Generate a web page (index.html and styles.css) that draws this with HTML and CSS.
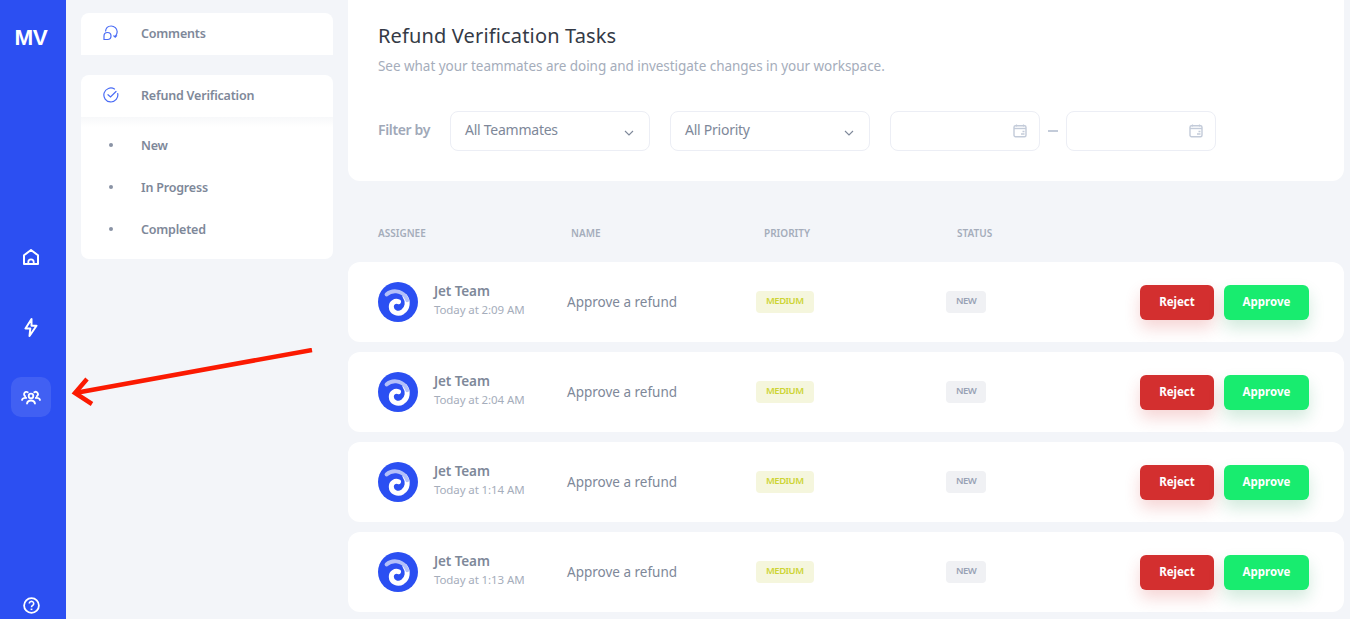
FILE: index.html
```html
<!DOCTYPE html>
<html lang="en">

<head>
  <meta charset="UTF-8">
  <meta name="viewport" content="width=device-width, initial-scale=1.0">
  <title>Refund Verification Tasks</title>
  <link rel="stylesheet" href="styles.css">
</head>

<body>
<svg class="defs" width="0" height="0">
  <symbol id="swirl" viewBox="0 0 40 40">
    <circle cx="20" cy="20" r="20" fill="#2b4ff2"/>
    <path d="M27 14.500C30.500 19 30 26.500 24.500 30C19.500 33 13.500 30 13.300 24.800C13.200 20.800 17 18.300 20.500 19.700" fill="none" stroke="#fff" stroke-width="5" stroke-linecap="round"/>
    <path d="M8.500 12.500C14 7.500 23 8.500 27 14C28 15.300 28.800 16.800 29.300 18.300" fill="none" stroke="#b3c0f9" stroke-width="3.800" stroke-linecap="round"/>
  </symbol>
  <symbol id="calendar" viewBox="0 0 14 14">
    <path d="M3.500 .5v2M10.500 .5v2" stroke="#c3cbd9" stroke-width="1.200"/>
    <rect x="1" y="1.800" width="12" height="11" rx="1.500" fill="none" stroke="#c3cbd9" stroke-width="1.400"/>
    <path d="M1 4.500h12" stroke="#c3cbd9" stroke-width="1.400"/>
    <path d="M8 10h3.500M9.500 7.500h2" stroke="#c3cbd9" stroke-width="1.400"/>
  </symbol>
  <symbol id="chevron" viewBox="0 0 10 6">
    <path d="M1 1l4 4 4-4" fill="none" stroke="#7e8899" stroke-width="1.100"/>
  </symbol>
</svg>

<aside class="sidebar">
  <div class="logo">MV</div>
  <nav class="side-nav">
    <a class="side-link">
      <svg width="16" height="16" viewBox="0 0 16 16" fill="none" stroke="#fff" stroke-width="2" stroke-linejoin="round"><path d="M1 6.300L8 1l7 5.300V15H1z"/><path d="M5.300 15v-2a2.700 2.700 0 0 1 5.400 0v2" stroke-width="1.800"/></svg>
    </a>
    <a class="side-link">
      <svg width="14" height="19" viewBox="0 0 14 19" fill="none" stroke="#fff" stroke-width="2" stroke-linejoin="round"><path d="M7.500 1L1.500 10.500h4.800L5.500 18 12.500 7.800H7.500z"/></svg>
    </a>
    <a class="side-link active">
      <svg width="20" height="15" viewBox="0 0 20 15" fill="none" stroke="#fff" stroke-width="1.800" stroke-linecap="round"><circle cx="10" cy="6" r="2.300"/><path d="M6 13.500c.4-2 2-3 4-3s3.600 1 4 3"/><path d="M4.200 6.200a2.300 2.300 0 1 1 2.500-4M15.800 6.200a2.300 2.300 0 1 0-2.500-4"/><path d="M1 10c.5-1.600 2-2.200 4.200-2M19 10c-.5-1.600-2-2.200-4.200-2"/></svg>
    </a>
  </nav>
  <a class="help">
    <svg width="17" height="17" viewBox="0 0 17 17" fill="none" stroke="#fff" stroke-width="1.800"><circle cx="8.500" cy="8.500" r="7.400"/><path d="M6.300 6.500a2.200 2.200 0 1 1 3.400 1.900c-.8.500-1.200.9-1.200 1.800" stroke-width="1.600"/><path d="M8.500 11.600v1.500"/></svg>
  </a>
</aside>

<section class="panel">
  <div class="menu-card">
    <div class="menu-head">
      <svg class="menu-icon" width="16" height="16" viewBox="0 0 16 16" fill="none" stroke="#4a6cf5" stroke-width="1.200"><path d="M2.500 6.500C2.800 3 5.200 1 8.200 1s6 2.500 6 5.800c0 1.800-.8 3.300-2 4.500"/><path d="M10.500 10.500l1.700 1.600 1.800-1.700"/><path d="M1 11c0-2 1.500-3.500 3.500-3.500S8 9 8 11s-1.500 3.500-3.500 3.500H1z"/></svg>
      <span>Comments</span>
    </div>
  </div>
  <div class="menu-card expanded">
    <div class="menu-head">
      <svg class="menu-icon" width="16" height="16" viewBox="0 0 16 16" fill="none" stroke="#4a6cf5" stroke-width="1.200" stroke-linecap="round"><path d="M14.700 6.500A7 7 0 1 1 11.500 2"/><path d="M5 7.700l2.500 2.300L13 4.500"/></svg>
      <span>Refund Verification</span>
    </div>
    <ul class="sub-menu">
      <li>New</li>
      <li>In Progress</li>
      <li>Completed</li>
    </ul>
  </div>
</section>

<main class="content">
  <header class="tasks-head">
    <h1>Refund Verification Tasks</h1>
    <p>See what your teammates are doing and investigate changes in your workspace.</p>
    <div class="filters">
      <span class="filter-label">Filter by</span>
      <div class="select">All Teammates <svg width="10" height="6"><use href="#chevron"/></svg></div>
      <div class="select">All Priority <svg width="10" height="6"><use href="#chevron"/></svg></div>
      <div class="dates">
        <div class="date"><svg width="14" height="14"><use href="#calendar"/></svg></div>
        <span class="dash"></span>
        <div class="date"><svg width="14" height="14"><use href="#calendar"/></svg></div>
      </div>
    </div>
  </header>

  <div class="table-head">
    <span>ASSIGNEE</span>
    <span>NAME</span>
    <span>PRIORITY</span>
    <span>STATUS</span>
  </div>

  <div class="task">
    <div class="assignee">
      <svg width="40" height="40"><use href="#swirl"/></svg>
      <div><b>Jet Team</b><small>Today at 2:09 AM</small></div>
    </div>
    <div class="task-name">Approve a refund</div>
    <div><span class="badge medium">MEDIUM</span></div>
    <div><span class="badge new">NEW</span></div>
    <div class="actions"><button class="btn reject">Reject</button><button class="btn approve">Approve</button></div>
  </div>
  <div class="task">
    <div class="assignee">
      <svg width="40" height="40"><use href="#swirl"/></svg>
      <div><b>Jet Team</b><small>Today at 2:04 AM</small></div>
    </div>
    <div class="task-name">Approve a refund</div>
    <div><span class="badge medium">MEDIUM</span></div>
    <div><span class="badge new">NEW</span></div>
    <div class="actions"><button class="btn reject">Reject</button><button class="btn approve">Approve</button></div>
  </div>
  <div class="task">
    <div class="assignee">
      <svg width="40" height="40"><use href="#swirl"/></svg>
      <div><b>Jet Team</b><small>Today at 1:14 AM</small></div>
    </div>
    <div class="task-name">Approve a refund</div>
    <div><span class="badge medium">MEDIUM</span></div>
    <div><span class="badge new">NEW</span></div>
    <div class="actions"><button class="btn reject">Reject</button><button class="btn approve">Approve</button></div>
  </div>
  <div class="task">
    <div class="assignee">
      <svg width="40" height="40"><use href="#swirl"/></svg>
      <div><b>Jet Team</b><small>Today at 1:13 AM</small></div>
    </div>
    <div class="task-name">Approve a refund</div>
    <div><span class="badge medium">MEDIUM</span></div>
    <div><span class="badge new">NEW</span></div>
    <div class="actions"><button class="btn reject">Reject</button><button class="btn approve">Approve</button></div>
  </div>
</main>

<!-- annotation drawn over the screenshot -->
<svg class="arrow" width="250" height="70" viewBox="0 0 250 70" fill="none" stroke="#fb1a02" stroke-width="4.500">
  <path d="M241 2L4 45"/>
  <path d="M16 31L4 45l17 11"/>
</svg>
</body>

</html>
```

FILE: styles.css
```css
* {
  box-sizing: border-box;
}

body {
  display: flex;
  height: 619px;
  margin: 0;
  overflow: hidden;
  background: #f3f5f9;
  font-family: "Noto Sans", "Open Sans", sans-serif;
  color: #7e8899;
}

.defs {
  position: absolute;
}

.sidebar {
  display: flex;
  flex-direction: column;
  align-items: center;
  flex: 0 0 66px;
  padding: 0 4px 3px 0;
  background: #2c4ff2;
}

.logo {
  margin-top: 22px;
  font-family: "Liberation Sans", sans-serif;
  font-size: 22.500px;
  line-height: 32px;
  font-weight: 700;
  letter-spacing: -0.300px;
  color: #fff;
}

.side-nav {
  display: flex;
  flex-direction: column;
  gap: 30px;
  margin-top: 183px;
}

.side-link {
  display: flex;
  align-items: center;
  justify-content: center;
  width: 40px;
  height: 40px;
  border-radius: 10px;
}

.side-link.active {
  background: rgba(255, 255, 255, 0.1);
}

.help {
  display: flex;
  margin-top: auto;
  margin-bottom: 2px;
}

.panel {
  flex: 0 0 252px;
  margin: 13px 15px 0;
}

.menu-card {
  margin-bottom: 20px;
  border-radius: 8px 8px 0 0;
  background: #fff;
  font-size: 12.500px;
  font-weight: 600;
  letter-spacing: -0.200px;
}

.menu-card.expanded {
  border-radius: 8px;
}

.menu-head {
  display: flex;
  align-items: center;
  height: 42px;
  padding: 0 0 2px 22px;
}

.menu-icon {
  margin-right: 22px;
}

.expanded .menu-head {
  position: relative;
}

.expanded .menu-head::after {
  content: "";
  position: absolute;
  top: 42px;
  left: 0;
  right: 0;
  height: 10px;
  background: linear-gradient(#f7f8fa, #fff);
}

.sub-menu {
  margin: 0;
  padding: 8px 0 8px;
  list-style: none;
}

.sub-menu li {
  position: relative;
  height: 42px;
  padding-left: 60px;
  line-height: 42px;
}

.sub-menu li::before {
  content: "";
  position: absolute;
  top: 18px;
  left: 28px;
  width: 4px;
  height: 4px;
  border-radius: 50%;
  background: #8a93a5;
}

.content {
  flex: 1;
  margin-right: 6px;
}

.tasks-head {
  height: 181px;
  padding: 23px 30px 0;
  border-radius: 0 0 12px 12px;
  background: #fff;
}

.tasks-head h1 {
  margin: 0;
  font-size: 20px;
  line-height: 26px;
  font-weight: 400;
  letter-spacing: 0.150px;
  color: #343a46;
}

.tasks-head p {
  margin: 5px 0 0;
  font-size: 13.500px;
  line-height: 24px;
  letter-spacing: -0.040px;
  color: #a5adbb;
}

.filters {
  display: flex;
  align-items: center;
  margin-top: 33px;
}

.filter-label {
  width: 72px;
  padding-bottom: 4px;
  font-size: 14px;
  font-weight: 600;
  letter-spacing: -0.350px;
  color: #a0a8b8;
}

.select {
  display: flex;
  align-items: center;
  justify-content: space-between;
  width: 200px;
  height: 40px;
  margin-right: 20px;
  padding: 0 15px 3px 14px;
  border: 1px solid #eceef5;
  border-radius: 8px;
  font-size: 14px;
  letter-spacing: -0.250px;
}

.select svg {
  margin-top: 6px;
}

.dates {
  display: flex;
  align-items: center;
}

.date {
  display: flex;
  align-items: center;
  justify-content: flex-end;
  width: 150px;
  height: 40px;
  padding-right: 12px;
  border: 1px solid #eceef5;
  border-radius: 8px;
}

.dash {
  width: 10px;
  height: 2px;
  margin: 0 8px;
  background: #c3cbd9;
}

.table-head {
  display: grid;
  grid-template-columns: repeat(4, 193px);
  align-items: center;
  height: 81px;
  padding: 23px 0 0 30px;
  font-size: 10px;
  font-weight: 600;
  color: #a5adbb;
}

.task {
  display: grid;
  grid-template-columns: 189px 189px 190px 100px 1fr;
  align-items: center;
  height: 80px;
  margin-bottom: 10px;
  padding: 0 35px 0 30px;
  border-radius: 12px;
  background: #fff;
}

.assignee {
  display: flex;
  align-items: center;
  gap: 16px;
}

.assignee > div {
  margin-top: -4px;
}

.assignee b {
  display: block;
  font-size: 13.500px;
  line-height: 20px;
  font-weight: 600;
  letter-spacing: -0.100px;
}

.assignee small {
  display: block;
  font-size: 11.500px;
  line-height: 18px;
  letter-spacing: -0.100px;
  color: #a5adbb;
}

.task-name {
  font-size: 13.500px;
}

.badge {
  display: block;
  width: fit-content;
  height: 22px;
  padding: 0 10px;
  border-radius: 4px;
  font-size: 9.500px;
  line-height: 20px;
  font-weight: 600;
  letter-spacing: -0.500px;
}

.medium {
  background: #f5f6dd;
  color: #cdd435;
}

.new {
  background: #f0f1f4;
  color: #98a2b4;
}

.actions {
  display: flex;
  justify-content: flex-end;
  gap: 10px;
}

.btn {
  height: 35px;
  padding: 0 0 2px;
  border: 0;
  border-radius: 6px;
  font-family: inherit;
  font-size: 11.500px;
  font-weight: 700;
  color: #fff;
}

.reject {
  width: 74px;
  background: #d32f2f;
  box-shadow: 0 8px 16px rgba(211, 47, 47, 0.2);
}

.approve {
  width: 85px;
  background: #18ec6f;
  box-shadow: 0 8px 16px rgba(24, 150, 80, 0.2);
}

.arrow {
  position: absolute;
  top: 348px;
  left: 71px;
}
```
